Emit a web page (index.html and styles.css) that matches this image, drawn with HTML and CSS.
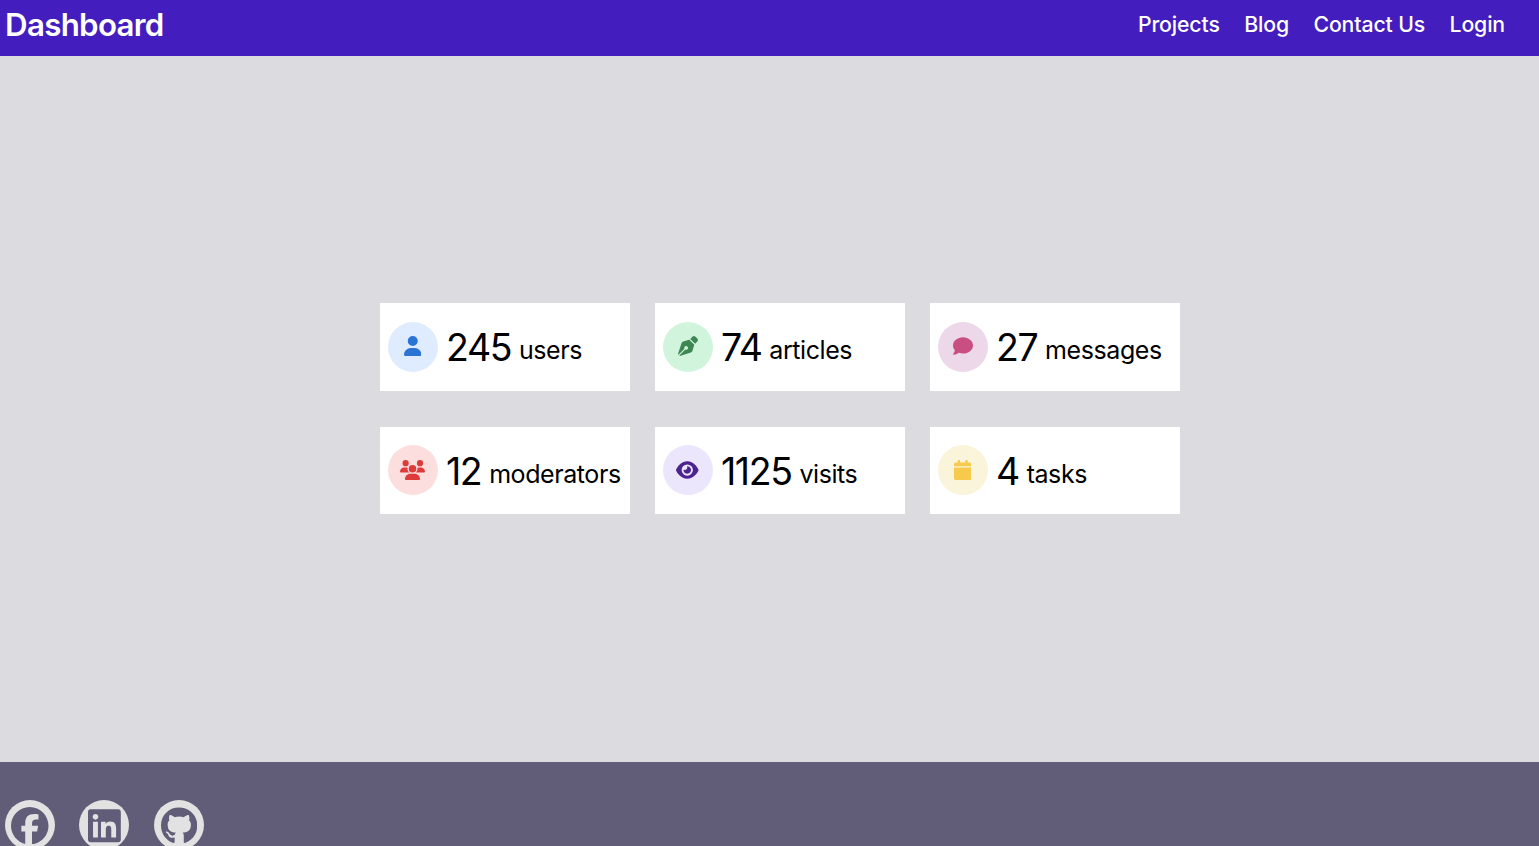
FILE: index.html
```html
<!DOCTYPE html>
<html lang="en">
<head>
<meta charset="utf-8">
<title>Dashboard</title>
<link rel="stylesheet" href="styles.css">
</head>
<body>
<header class="header">
  <h1 class="brand">Dashboard</h1>
  <nav class="nav">
    <a>Projects</a>
    <a>Blog</a>
    <a>Contact Us</a>
    <a>Login</a>
  </nav>
</header>
<main class="main">
  <section class="cards">
    <div class="card">
      <span class="badge users"><svg viewBox="0 0 448 512"><path d="M224 256A128 128 0 1 0 224 0a128 128 0 1 0 0 256zm-45.700 48C79.800 304 0 383.800 0 482.300C0 498.700 13.300 512 29.700 512H418.300c16.400 0 29.700-13.300 29.700-29.700C448 383.800 368.200 304 269.700 304H178.300z"/></svg></span>
      <p class="stat"><span class="count">245</span> <span class="label">users</span></p>
    </div>
    <div class="card">
      <span class="badge articles"><svg viewBox="0 0 512 512"><path d="M368.400 18.300L312.700 74.100 437.900 199.300l55.700-55.700c21.900-21.900 21.900-57.300 0-79.200L447.600 18.300c-21.900-21.900-57.300-21.900-79.200 0zM288 94.600l-9.200 2.800L134.700 140.600c-19.900 6-35.700 21.200-42.300 41L3.800 445.800c-3.800 11.300-1 23.900 7.300 32.400L164.700 324.700c-3-6.300-4.700-13.300-4.700-20.700c0-26.500 21.500-48 48-48s48 21.500 48 48s-21.500 48-48 48c-7.400 0-14.400-1.700-20.700-4.700L33.700 500.900c8.600 8.300 21.100 11.200 32.400 7.300l264.300-88.600c19.700-6.600 35-22.400 41-42.300l43.200-144.100 2.700-9.200L288 94.600z"/></svg></span>
      <p class="stat"><span class="count">74</span> <span class="label">articles</span></p>
    </div>
    <div class="card">
      <span class="badge messages"><svg viewBox="0 0 512 512"><path d="M512 240c0 114.900-114.600 208-256 208c-37.100 0-72.300-6.400-104.100-17.900c-11.900 8.700-31.300 20.600-54.300 30.600C73.600 471.100 44.700 480 16 480c-6.500 0-12.300-3.900-14.800-9.900c-2.500-6-1.100-12.800 3.400-17.400l.3-.3c.3-.3 .7-.7 1.300-1.400c1.100-1.200 2.800-3.100 4.900-5.700c4.100-5 9.600-12.400 15.200-21.600c10-16.600 19.500-38.400 21.400-62.900C17.700 326.800 0 285.100 0 240C0 125.100 114.600 32 256 32s256 93.100 256 208z"/></svg></span>
      <p class="stat"><span class="count">27</span> <span class="label">messages</span></p>
    </div>
    <div class="card">
      <span class="badge moderators"><svg viewBox="0 0 640 512"><path d="M144 0a80 80 0 1 1 0 160A80 80 0 1 1 144 0zM512 0a80 80 0 1 1 0 160A80 80 0 1 1 512 0zM0 298.700C0 239.800 47.800 192 106.700 192h42.700c15.900 0 31 3.500 44.600 9.700c-1.300 7.200-1.900 14.700-1.900 22.300c0 38.200 16.800 72.500 43.300 96H21.300C9.600 320 0 310.400 0 298.700zM405.300 320h-.7c26.600-23.500 43.300-57.800 43.300-96c0-7.600-.7-15-1.900-22.300c13.600-6.300 28.700-9.700 44.600-9.700h42.700C592.200 192 640 239.800 640 298.700c0 11.800-9.600 21.300-21.300 21.300H405.300zM224 224a96 96 0 1 1 192 0 96 96 0 1 1 -192 0zM128 485.300C128 411.700 187.700 352 261.300 352H378.700C452.300 352 512 411.700 512 485.300c0 14.700-11.900 26.700-26.700 26.700H154.700c-14.700 0-26.700-11.900-26.700-26.700z"/></svg></span>
      <p class="stat"><span class="count">12</span> <span class="label">moderators</span></p>
    </div>
    <div class="card">
      <span class="badge visits"><svg viewBox="0 0 576 512"><path d="M288 32c-80.800 0-145.500 36.800-192.600 80.600C48.600 156 17.300 208 2.500 243.700c-3.300 7.900-3.300 16.700 0 24.600C17.300 304 48.600 356 95.400 399.400C142.500 443.200 207.200 480 288 480s145.500-36.800 192.600-80.600c46.800-43.500 78.100-95.400 93-131.100c3.300-7.900 3.300-16.700 0-24.600c-14.900-35.700-46.200-87.700-93-131.100C433.500 68.800 368.800 32 288 32zM144 256a144 144 0 1 1 288 0 144 144 0 1 1 -288 0zm144-64c0 35.300-28.700 64-64 64c-7.100 0-13.900-1.200-20.300-3.300c-5.500-1.800-11.900 1.600-11.700 7.400c.3 6.900 1.300 13.800 3.200 20.700c13.700 51.200 66.400 81.600 117.600 67.900s81.600-66.400 67.900-117.600c-11.100-41.500-47.800-69.400-88.600-71.100c-5.800-.2-9.200 6.100-7.400 11.700c2.100 6.400 3.300 13.200 3.300 20.300z"/></svg></span>
      <p class="stat"><span class="count">1125</span> <span class="label">visits</span></p>
    </div>
    <div class="card">
      <span class="badge tasks"><svg viewBox="0 0 448 512"><path d="M96 32V64H48C21.500 64 0 85.500 0 112v48H448V112c0-26.500-21.500-48-48-48H352V32c0-17.700-14.300-32-32-32s-32 14.300-32 32V64H160V32c0-17.700-14.300-32-32-32S96 14.300 96 32zM448 192H0V464c0 26.500 21.500 48 48 48H400c26.500 0 48-21.500 48-48V192z"/></svg></span>
      <p class="stat"><span class="count">4</span> <span class="label">tasks</span></p>
    </div>
  </section>
</main>
<footer class="footer">
  <a class="social"><svg viewBox="0 0 512 512"><path d="M512 256C512 114.600 397.400 0 256 0S0 114.600 0 256C0 376 82.700 476.800 194.200 504.500V334.200H141.400V256h52.800V222.300c0-87.100 39.400-127.500 125-127.500c16.200 0 44.200 3.200 55.700 6.400V172c-6-.6-16.500-1-29.600-1c-42 0-58.200 15.900-58.200 57.200V256h83.600l-14.400 78.200H287V510.100C413.800 494.800 512 386.900 512 256z"/></svg></a>
  <a class="social"><svg viewBox="0 0 448 512"><path d="M416 32H31.900C14.300 32 0 46.500 0 64.300v383.400C0 465.500 14.300 480 31.900 480H416c17.600 0 32-14.500 32-32.300V64.300c0-17.800-14.400-32.300-32-32.300zM135.400 416H69V202.200h66.500V416zm-33.200-243c-21.300 0-38.500-17.300-38.500-38.500S80.900 96 102.200 96c21.200 0 38.500 17.300 38.500 38.500 0 21.300-17.200 38.500-38.500 38.500zm282.100 243h-66.400V312c0-24.800-.5-56.700-34.500-56.700-34.600 0-39.900 27-39.900 54.900V416h-66.400V202.200h63.700v29.200h.9c8.900-16.800 30.600-34.500 62.200-34.500 66.500 0 79.900 43.800 79.900 100.900V416z"/></svg></a>
  <a class="social"><svg viewBox="0 0 496 512"><path d="M165.900 397.400c0 2-2.300 3.600-5.200 3.600-3.300.3-5.600-1.300-5.600-3.600 0-2 2.300-3.600 5.200-3.600 3-.3 5.600 1.300 5.600 3.600zM244.800 8C106.100 8 0 113.300 0 252c0 110.900 69.800 205.800 169.500 239.200 12.800 2.300 17.300-5.600 17.300-12.100 0-6.200-.3-40.400-.3-61.400 0 0-70 15-84.700-29.800 0 0-11.400-29.100-27.800-36.600 0 0-22.900-15.700 1.600-15.400 0 0 24.900 2 38.600 25.800 21.900 38.600 58.600 27.500 72.900 20.900 2.300-16 8.800-27.100 16-33.700-55.900-6.200-112.300-14.300-112.300-110.500 0-27.500 7.600-41.300 23.600-58.900-2.600-6.500-11.100-33.300 2.600-67.900 20.900-6.500 69 27 69 27 20-5.600 41.500-8.500 62.800-8.500s42.800 2.900 62.800 8.500c0 0 48.100-33.600 69-27 13.700 34.700 5.200 61.400 2.600 67.900 16 17.700 25.800 31.500 25.800 58.900 0 96.500-58.900 104.200-114.800 110.500 9.200 7.900 17 22.900 17 46.400 0 33.700-.3 75.400-.3 83.600 0 6.500 4.600 14.400 17.300 12.100C428.200 457.800 496 362.900 496 252 496 113.300 383.500 8 244.800 8z"/></svg></a>
</footer>
</body>
</html>
```
FILE: styles.css
```css
* { box-sizing: border-box; margin: 0; padding: 0; }
body {
  display: flex;
  flex-direction: column;
  height: 100vh;
  overflow: hidden;
  font-family: Inter, sans-serif;
  font-size: 25px;
  color: #000;
  background: #dcdbe0;
}
.header {
  display: flex;
  flex: none;
  justify-content: space-between;
  height: 56px;
  padding: 5px 34px 0 5px;
  background: #431dbe;
  color: #fff;
}
.brand {
  font-size: 31.25px;
  font-weight: 600;
  letter-spacing: -0.68px;
  line-height: 40px;
}
.nav {
  display: flex;
  gap: 24.5px;
  font-size: 21.25px;
  font-weight: 500;
  letter-spacing: -0.14px;
  line-height: 39px;
}
.main {
  flex: none;
  height: 706px;
  padding: 247px 0 0 380px;
}
.cards {
  display: grid;
  grid-template-columns: repeat(3, 250px);
  gap: 36px 25px;
}
.card {
  display: flex;
  align-items: center;
  gap: 8px;
  height: 87.5px;
  padding-left: 8px;
  background: #fff;
  white-space: nowrap;
}
.badge, .social {
  display: flex;
  flex: none;
  align-items: center;
  justify-content: center;
  width: 50px;
  height: 50px;
  border-radius: 50%;
}
.badge { padding: 0 1px 1px 0; }
.badge svg { height: 20px; fill: currentColor; }
.stat { display: flex; align-items: center; gap: 7.8px; }
.count {
  padding-top: 2.5px;
  font-size: 37.5px;
  line-height: 46px;
  letter-spacing: -1.4px;
}
.label {
  padding-top: 7px;
  line-height: 30px;
  letter-spacing: -0.42px;
}
.users { background: #dfecff; color: #2b73d5; }
.articles { background: #d0f4dc; color: #3d8753; }
.messages { background: #edd8ea; color: #c84f80; }
.moderators { background: #fddede; color: #de3b3b; }
.visits { background: #ebe6fc; color: #4c238f; }
.tasks { background: #faf4da; color: #f7ca4d; }
.footer {
  display: flex;
  flex: 1;
  min-height: 0;
  gap: 24.4px;
  padding: 38px 5px 0;
  background: #615d78;
}
.social { padding-top: 1px; background: #e2e2e2; color: #615d78; }
.social svg { height: 37.5px; fill: currentColor; }
```
